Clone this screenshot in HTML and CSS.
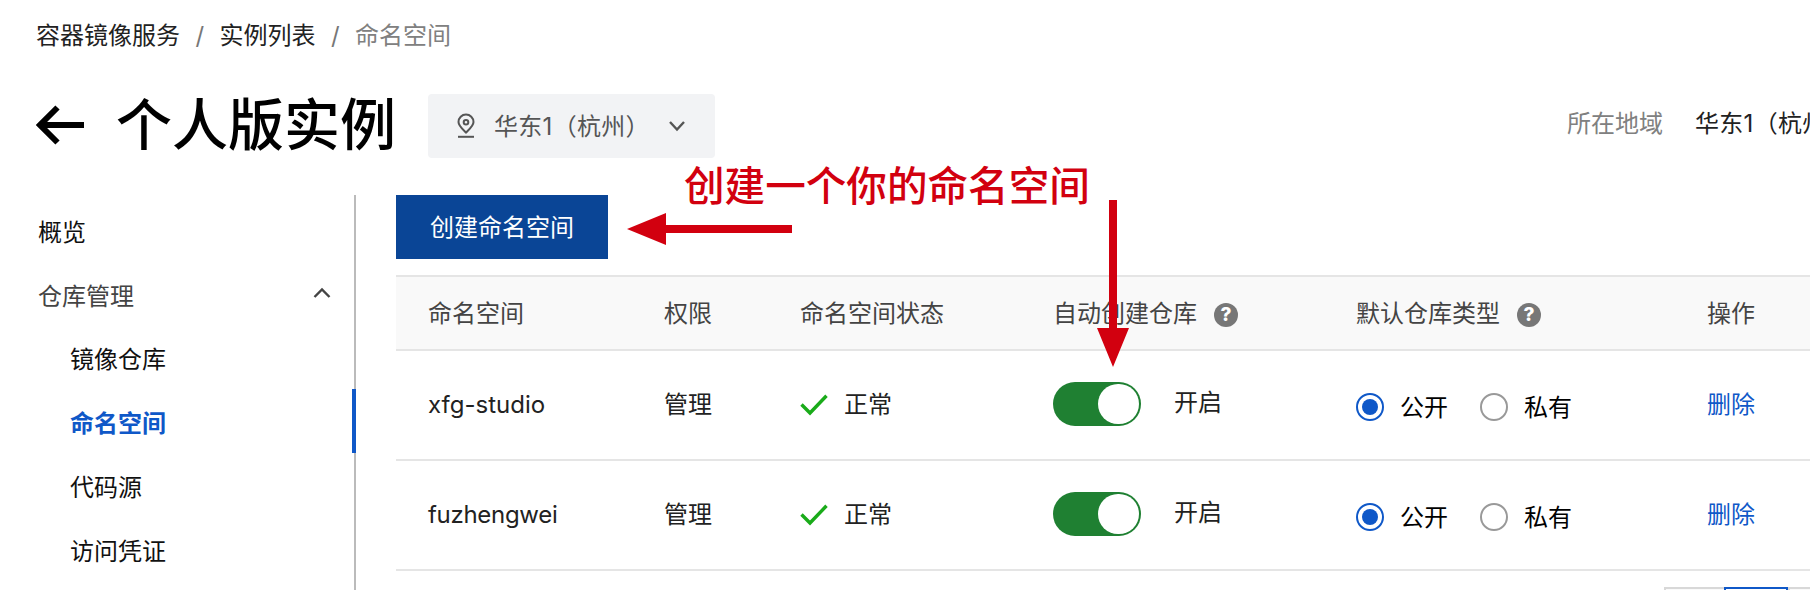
FILE: index.html
```html
<!DOCTYPE html>
<html lang="zh-CN">
<head>
<meta charset="utf-8">
<title>命名空间</title>
<link rel="stylesheet" href="styles.css">
</head>
<body>
<nav class="breadcrumb">
  <a>容器镜像服务</a><span class="sep">/</span><a>实例列表</a><span class="sep">/</span><span class="current">命名空间</span>
</nav>
<header class="header">
  <svg class="back" width="48" height="40" viewBox="0 0 48 40" fill="none" stroke="#000" stroke-width="6"><path d="M3 20H48M21.5 2.500L4 20L21.500 37.500"/></svg>
  <h1 class="title">个人版实例</h1>
  <div class="region">
    <svg class="pin" width="18" height="26" viewBox="0 0 18 26" fill="none" stroke="#555" stroke-width="2"><path d="M9 19.500C5.500 16 1.500 12.800 1.500 9a7.500 7.500 0 0 1 15 0c0 3.800-4 7-7.500 10.500z"/><circle cx="9" cy="9.300" r="2.300"/><path d="M1 23.800H17"/></svg>
    <span class="region-name">华东1（杭州）</span>
    <svg class="chev" width="18" height="12" viewBox="0 0 18 12" fill="none" stroke="#555" stroke-width="2.400"><path d="M2 2L9 9.500L16 2"/></svg>
  </div>
  <div class="meta"><span class="meta-label">所在地域</span><span class="meta-value">华东1（杭州）</span></div>
</header>
<div class="layout">
  <aside class="sidebar">
    <div class="item">概览</div>
    <div class="item group">仓库管理<svg width="18" height="12" viewBox="0 0 18 12" fill="none" stroke="#444" stroke-width="2.400"><path d="M1.500 10L9 2.500L16.500 10"/></svg></div>
    <div class="item sub">镜像仓库</div>
    <div class="item sub active">命名空间</div>
    <div class="item sub">代码源</div>
    <div class="item sub">访问凭证</div>
  </aside>
  <main class="main">
    <button class="create">创建命名空间</button>
    <div class="table">
      <div class="row head">
        <span>命名空间</span><span>权限</span><span>命名空间状态</span>
        <span class="with-help">自动创建仓库<i class="help">?</i></span>
        <span class="with-help">默认仓库类型<i class="help">?</i></span>
        <span>操作</span>
      </div>
      <div class="row">
        <span class="name">xfg-studio</span><span>管理</span>
        <span class="status"><svg width="28" height="22" viewBox="0 0 28 22" fill="none" stroke="#1aab1a" stroke-width="3.400"><path d="M1.500 10.500L10 19L26.500 1.800"/></svg>正常</span>
        <span class="auto"><i class="switch"></i><span class="auto-label">开启</span></span>
        <span class="type"><i class="radio on"></i><span class="type-label">公开</span><i class="radio second"></i><span class="type-label">私有</span></span>
        <a class="delete">删除</a>
      </div>
      <div class="row">
        <span class="name wide">fuzhengwei</span><span>管理</span>
        <span class="status"><svg width="28" height="22" viewBox="0 0 28 22" fill="none" stroke="#1aab1a" stroke-width="3.400"><path d="M1.500 10.500L10 19L26.500 1.800"/></svg>正常</span>
        <span class="auto"><i class="switch"></i><span class="auto-label">开启</span></span>
        <span class="type"><i class="radio on"></i><span class="type-label">公开</span><i class="radio second"></i><span class="type-label">私有</span></span>
        <a class="delete">删除</a>
      </div>
    </div>
    <div class="pager"><i class="page"></i><i class="page selected"></i><i class="page"></i></div>
  </main>
</div>
<div class="note">创建一个你的命名空间</div>
<svg class="arrows" width="1810" height="590" viewBox="0 0 1810 590" fill="#d2000f"><path d="M627 229L666 213V225H792V233H666V245Z"/><path d="M1109 200H1117V328H1129L1113 367L1097 328H1109Z"/></svg>
</body>
</html>
```
FILE: styles.css
```css
* { box-sizing: border-box; }
html { height: 590px; overflow: hidden; }
body {
  margin: 0;
  width: 1810px;
  height: 590px;
  overflow: hidden;
  position: relative;
  background: #fff;
  color: #222;
  font: 24px/36px Inter, "Noto Sans CJK SC", sans-serif;
}
i { font-style: normal; }
.breadcrumb { display: flex; height: 72px; padding: 18px 0 0 36px; }
.sep { width: 39.5px; text-align: center; color: #777; }
.current { color: #808080; }
.header { display: flex; align-items: center; height: 106px; padding: 0 0 0 36px; white-space: nowrap; }
.back { flex: none; margin-top: -1px; }
.title { flex: none; margin: 0 0 0 32px; width: 281px; font-size: 56px; line-height: 80px; font-weight: 500; color: #000; }
.region {
  flex: none;
  display: flex;
  align-items: center;
  width: 287px;
  height: 64px;
  margin: 2px 0 0 31px;
  padding-left: 29px;
  border-radius: 4px;
  background: #f2f3f5;
  color: #555;
}
.region-name { width: 160px; margin: 2px 0 0 19px; letter-spacing: 0.3px; }
.chev { margin-left: 14px; }
.meta { display: flex; width: 243px; margin: -2px 0 0 852px; overflow: hidden; }
.meta-label { flex: none; width: 128px; color: #808080; }
.meta-value { flex: none; letter-spacing: 0.3px; }
.layout { display: flex; height: 412px; padding-top: 17px; overflow: hidden; }
.sidebar { width: 356px; height: 395px; border-right: 2px solid #bbb; padding-top: 2px; }
.item { height: 64px; padding: 18px 0 0 38px; color: #111; line-height: 36px; }
.group { display: flex; justify-content: space-between; padding-right: 23px; color: #444; }
.group svg { margin-top: 8px; }
.sub { padding: 17px 0 0 70px; }
.active { position: relative; color: #0f58c8; font-weight: 700; }
.active::after {
  content: "";
  position: absolute;
  right: -2px;
  top: 0;
  width: 4px;
  height: 64px;
  background: #0f58c8;
}
.main { flex: none; width: 1414px; height: 395px; margin-left: 40px; overflow: hidden; }
.create {
  display: block;
  width: 212px;
  height: 64px;
  padding: 2px 0 0;
  border: 0;
  background: #0a4596;
  color: #fff;
  font: inherit;
}
.table { margin-top: 16px; border-top: 2px solid #e5e5e5; }
.row {
  display: grid;
  grid-template-columns: 236px 136px 253px 303px 351px 1fr;
  align-items: center;
  height: 110px;
  padding-left: 32px;
  border-bottom: 2px solid #e5e5e5;
}
.head { height: 74px; padding-top: 1px; background: #f9f9f9; color: #444; }
.with-help { display: flex; align-items: center; }
.help {
  width: 24px;
  height: 24px;
  margin: 2px 0 0 17px;
  border-radius: 50%;
  background: #777;
  color: #fff;
  font: 800 19px/24px Inter, sans-serif;
  text-align: center;
}
.wide { letter-spacing: -0.3px; }
.status { display: flex; align-items: center; gap: 16px; }
.auto { display: flex; align-items: center; margin-top: -2px; }
.auto-label { margin-top: -2px; }
.switch {
  display: flex;
  justify-content: flex-end;
  width: 88px;
  height: 44px;
  margin-right: 33px;
  padding: 2px;
  border-radius: 22px;
  background: #1f8032;
}
.switch::after { content: ""; width: 41px; height: 40px; border-radius: 20.5px; background: #fff; }
.type { display: flex; align-items: center; margin-top: 4px; color: #000; }
.type-label { margin-top: 2px; }
.radio { width: 28px; height: 28px; margin-right: 16px; border: 2px solid #999; border-radius: 50%; }
.on { padding: 4px; border-color: #0f58c8; }
.on::after { content: ""; display: block; width: 16px; height: 16px; border-radius: 50%; background: #0f58c8; }
.second { margin-left: 32px; }
.delete { color: #0f58c8; }
.pager { display: flex; margin: 16px 0 0 1268px; }
.page { flex: none; width: 60px; height: 56px; border: 2px solid #d8d8d8; border-right: 0; background: #fafafa; }
.selected { width: 64px; border: 2px solid #0f58c8; background: #fff; }
.note {
  position: absolute;
  left: 684px;
  top: 157px;
  color: #d2000f;
  font-size: 40.600px;
  line-height: 60px;
  font-weight: 500;
  white-space: nowrap;
}
.arrows { position: absolute; left: 0; top: 0; }
```
